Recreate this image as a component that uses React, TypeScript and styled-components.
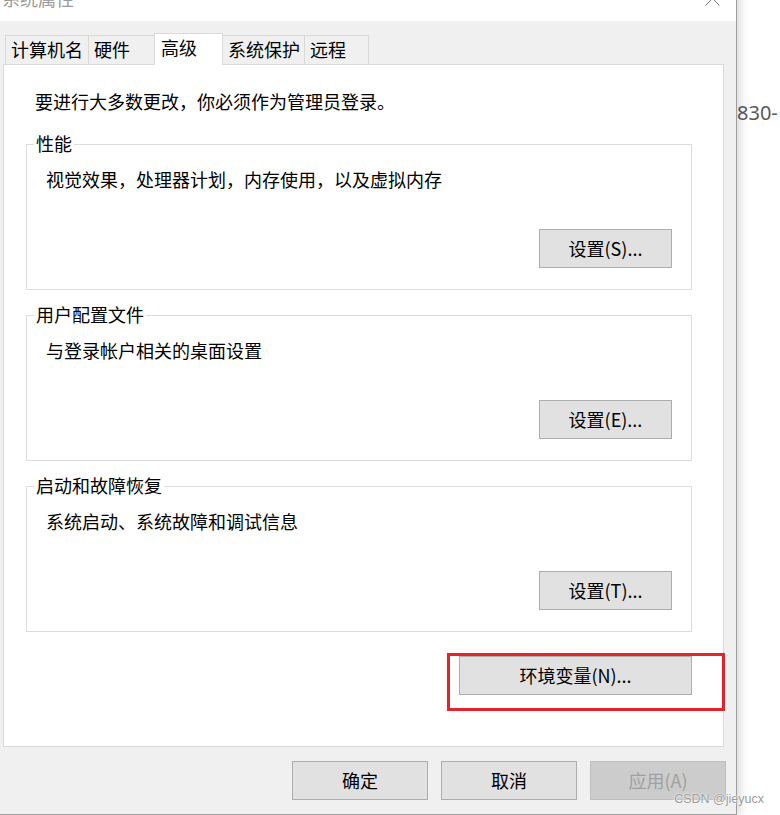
import React from "react";
import styled, { createGlobalStyle } from "styled-components";

const UI_FONT = `"Noto Sans CJK SC", "Microsoft YaHei UI", sans-serif`;

const GlobalStyle = createGlobalStyle`
    html, body {
        margin: 0;
        padding: 0;
        background: #ffffff;
    }
    body {
        width: 780px;
        height: 815px;
        overflow: hidden;
    }
`;

const Page = styled.div`
    position: relative;
    display: flex;
    width: 780px;
    height: 815px;
    overflow: hidden;
    font-family: ${UI_FONT};
    font-size: 18px;
    color: #000;
`;

const Dialog = styled.div`
    position: relative;
    z-index: 1;
    flex: 0 0 737px;
    height: 826px;
    margin-top: -11px;
    display: flex;
    flex-direction: column;
    box-sizing: border-box;
    background: #f0f0f0;
    border-right: 1px solid #9d9d9d;
    border-bottom: 1px solid #a0a0a0;
    box-shadow: 3px 0 9px rgba(0, 0, 0, 0.16);
`;

const TitleBar = styled.div`
    height: 32px;
    flex: 0 0 32px;
    display: flex;
    justify-content: space-between;
    align-items: flex-start;
    background: #ffffff;
`;

const Title = styled.span`
    padding-left: 2px;
    line-height: 18px;
    color: #9a9a9a;
`;

const CloseIcon = styled.svg`
    margin: 2px 16px 0 0;
`;

const Body = styled.div`
    flex: 1;
    display: flex;
    flex-direction: column;
    padding: 12px 10px 0 3px;
`;

const TabRow = styled.div`
    display: flex;
    align-items: flex-end;
    padding-left: 2px;
`;

const Tab = styled.div<{ $active?: boolean; $w: number }>`
    width: ${p => p.$w}px;
    box-sizing: border-box;
    border: 1px solid #d9d9d9;
    border-bottom: none;
    line-height: 27px;
    white-space: nowrap;
    padding-left: ${p => (p.$active ? 6 : 5)}px;
    padding-bottom: ${p => (p.$active ? 4 : 1)}px;
    margin-bottom: ${p => (p.$active ? -1 : 0)}px;
    background: ${p => (p.$active ? "#ffffff" : "#f0f0f0")};
    position: relative;
    z-index: ${p => (p.$active ? 2 : 1)};

    & + & {
        margin-left: -1px;
    }
`;

const Panel = styled.div`
    width: 721px;
    box-sizing: border-box;
    border: 1px solid #d9d9d9;
    background: #ffffff;
    padding: 24px 31px 51px 22px;
`;

const Intro = styled.div`
    padding-left: 9px;
    line-height: 24px;
`;

const Group = styled.fieldset<{ $first?: boolean }>`
    margin: ${p => (p.$first ? 22 : 16)}px 0 0;
    padding: 14px 19px 21px 7px;
    border: 1px solid #dcdcdc;
    min-width: 0;
`;

const Legend = styled.legend`
    padding: 0 2px 2px;
    line-height: 16px;
`;

const Description = styled.div`
    padding-left: 12px;
    line-height: 24px;
`;

const ButtonRow = styled.div<{ $gap?: number }>`
    display: flex;
    justify-content: flex-end;
    margin-top: ${p => p.$gap ?? 38}px;
`;

const WinButton = styled.button<{ $w: number; $disabled?: boolean }>`
    width: ${p => p.$w}px;
    height: 39px;
    box-sizing: border-box;
    padding: 0 0 2px;
    font-family: ${UI_FONT};
    font-size: 18px;
    line-height: 24px;
    background: ${p => (p.$disabled ? "#cccccc" : "#e1e1e1")};
    border: 1px solid ${p => (p.$disabled ? "#bfbfbf" : "#adadad")};
    color: ${p => (p.$disabled ? "#a0a0a0" : "#000000")};
    cursor: default;
`;

const Highlight = styled.div`
    position: relative;
`;

const RedFrame = styled.div`
    position: absolute;
    left: -12px;
    top: -3px;
    right: -33px;
    bottom: -16px;
    border: 3px solid #e3222c;
    pointer-events: none;
`;

const Footer = styled.div`
    display: flex;
    justify-content: flex-end;
    gap: 13px;
    padding-top: 14px;
`;

const Side = styled.div`
    flex: 1;
    padding-top: 99px;
    font-family: "Noto Sans", "Open Sans", sans-serif;
    font-size: 20px;
    line-height: 28px;
    color: #5a5a5a;
    white-space: nowrap;
    overflow: hidden;
`;

const Watermark = styled.div`
    position: absolute;
    right: 16px;
    bottom: 9px;
    z-index: 3;
    font-family: "Liberation Sans", Arial, sans-serif;
    font-size: 12.5px;
    color: #9a9a9a;
    text-shadow: 0 0 2px #ffffff, 0 0 1px #ffffff;
`;

const tabs = [
    { label: "计算机名", w: 84 },
    { label: "硬件", w: 67 },
    { label: "高级", w: 69, active: true },
    { label: "系统保护", w: 83 },
    { label: "远程", w: 65 },
];

const groups = [
    { title: "性能", text: "视觉效果，处理器计划，内存使用，以及虚拟内存", button: "设置(S)..." },
    { title: "用户配置文件", text: "与登录帐户相关的桌面设置", button: "设置(E)..." },
    { title: "启动和故障恢复", text: "系统启动、系统故障和调试信息", button: "设置(T)..." },
];

export default function App() {
    return (
        <>
            <GlobalStyle />
            <Page>
                <Dialog>
                    <TitleBar>
                        <Title>系统属性</Title>
                        <CloseIcon width="15" height="15" viewBox="0 0 15 15">
                            <path d="M0.5 0.5 L14.5 14.5 M14.5 0.5 L0.5 14.5" stroke="#7a7a7a" strokeWidth="1" fill="none" />
                        </CloseIcon>
                    </TitleBar>
                    <Body>
                        <TabRow>
                            {tabs.map(t => (
                                <Tab key={t.label} $w={t.w} $active={t.active}>
                                    {t.label}
                                </Tab>
                            ))}
                        </TabRow>
                        <Panel>
                            <Intro>要进行大多数更改，你必须作为管理员登录。</Intro>
                            {groups.map((g, i) => (
                                <Group key={g.title} $first={i === 0}>
                                    <Legend>{g.title}</Legend>
                                    <Description>{g.text}</Description>
                                    <ButtonRow>
                                        <WinButton $w={133}>{g.button}</WinButton>
                                    </ButtonRow>
                                </Group>
                            ))}
                            <ButtonRow $gap={24}>
                                <Highlight>
                                    <WinButton $w={233}>环境变量(N)...</WinButton>
                                    <RedFrame />
                                </Highlight>
                            </ButtonRow>
                        </Panel>
                        <Footer>
                            <WinButton $w={136}>确定</WinButton>
                            <WinButton $w={136}>取消</WinButton>
                            <WinButton $w={136} $disabled>应用(A)</WinButton>
                        </Footer>
                    </Body>
                </Dialog>
                <Side>830-</Side>
                <Watermark>CSDN @jieyucx</Watermark>
            </Page>
        </>
    );
}
